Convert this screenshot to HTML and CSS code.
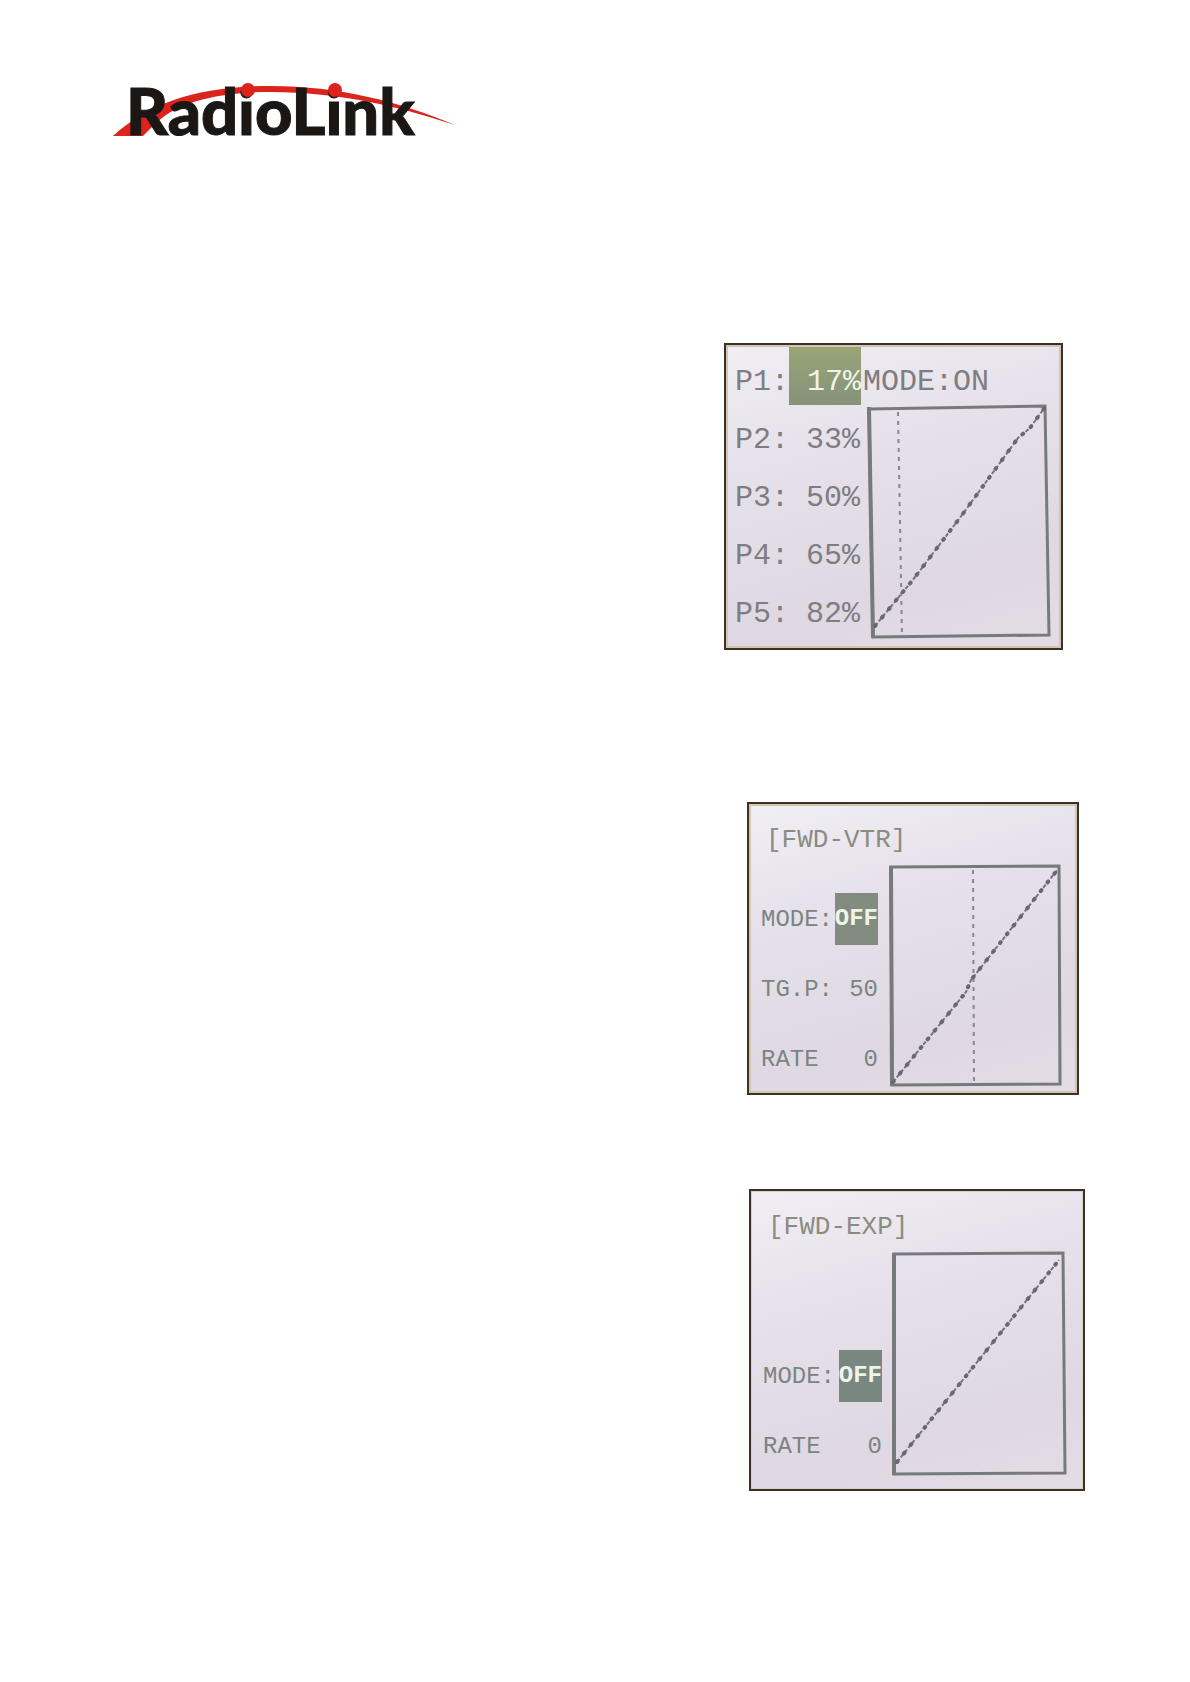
FILE: index.html
```html
<!DOCTYPE html>
<html lang="en">

<head>
    <meta charset="UTF-8">
    <meta name="viewport" content="width=device-width, initial-scale=1.0">
    <title>RadioLink</title>
    <link rel="stylesheet" href="styles.css">
</head>

<body>
    <div class="page">
        <header>
            <svg class="logo" viewBox="0 0 350 60" role="img" aria-label="RadioLink">
                <path fill="#dc231c" d="M3 56C40 22 90 6 160 6C230 6 290 22 345 45C290 27 230 12 160 12C115 12 85 20 66 29C52 36 45 44 33 56Z" />
                <text class="logo-text" x="16" y="55">RadioLink</text>
                <circle fill="#dc231c" cx="138" cy="10" r="7" />
                <circle fill="#dc231c" cx="225" cy="10" r="7" />
            </svg>
        </header>
        <main>
            <section class="screen points">
                <div class="list">
                    <p><span>P1:</span><mark>17%</mark></p>
                    <p><span>P2:</span><span>33%</span></p>
                    <p><span>P3:</span><span>50%</span></p>
                    <p><span>P4:</span><span>65%</span></p>
                    <p><span>P5:</span><span>82%</span></p>
                </div>
                <div class="side">
                    <p class="mode">MODE:ON</p>
                    <svg class="chart" viewBox="-2 0 196 240">
                        <path class="box" d="M4 7L180 4L184 233L8 235Z" />
                        <path class="edge" d="M4 5V7L8 236" />
                        <path class="marker" d="M33 10L37 233" />
                        <path class="curve" d="M10 224L37 191L47 179L97 113L153 36L165 26L180 5" />
                        <path class="beads" d="M10 224L37 191L47 179L97 113L153 36L165 26L180 5" />
                    </svg>
                </div>
            </section>

            <section class="screen vtr">
                <h2>[FWD-VTR]</h2>
                <div class="body">
                    <div class="list">
                        <p><span>MODE:</span><mark>OFF</mark></p>
                        <p><span>TG.P:</span><span>50</span></p>
                        <p><span>RATE</span><span>0</span></p>
                    </div>
                    <svg class="chart" viewBox="0 0 190 226">
                        <path class="box" d="M6 3L174 2L175 220L7 221Z" />
                        <path class="edge" d="M6 2L7 222" />
                        <path class="marker" d="M88 6L89 219" />
                        <path class="curve" d="M8 218L81 128L86 116L173 5" />
                        <path class="beads" d="M8 218L81 128L86 116L173 5" />
                    </svg>
                </div>
            </section>

            <section class="screen exp">
                <h2>[FWD-EXP]</h2>
                <div class="body">
                    <div class="list">
                        <p><span>MODE:</span><mark>OFF</mark></p>
                        <p><span>RATE</span><span>0</span></p>
                    </div>
                    <svg class="chart" viewBox="0 0 192 234">
                        <path class="box" d="M5 3L174 2L176 222L5 223Z" />
                        <path class="edge" d="M5 2V224" />
                        <path class="curve" d="M8 211L170 9" />
                        <path class="beads" d="M8 211L170 9" />
                    </svg>
                </div>
            </section>
        </main>
    </div>
</body>

</html>
```

FILE: styles.css
```css
* {
    box-sizing: border-box;
}
body {
    margin: 0;
    background-color: white;
}
p, h2 {
    margin: 0;
}
.page {
    padding: 80px 105px;
}
.logo {
    display: block;
    width: 350px;
    height: 60px;
    margin-left: 5px;
}
.logo-text {
    font: 900 65px Lato, sans-serif;
    fill: #1a1715;
    stroke: #1a1715;
    stroke-width: 1;
}
main {
    display: flex;
    flex-direction: column;
    align-items: flex-end;
    padding-top: 203px;
}

/* lcd screens */
.screen {
    border: 2px solid #3a3226;
    box-shadow: inset 0 0 0 2px #d3c5b2;
    padding: 2px;
    background: linear-gradient(165deg, #f1eef4 0%, #e5e0ea 35%, #dfd8e2 75%, #e4dbe5 100%);
    font-family: "Liberation Mono", monospace;
    color: #7d7d82;
}
.list p {
    display: flex;
    justify-content: space-between;
}
.screen mark {
    color: #f0f4e8;
}

.points {
    display: grid;
    grid-template-columns: 135px 1fr;
    width: 339px;
    height: 307px;
    margin-right: 22px;
    font-size: 30px;
}
.points .list {
    padding-left: 7px;
    padding-right: 3px;
}
.points .list p {
    height: 58px;
}
.points span, .points mark, .mode {
    padding-top: 12px;
    line-height: 46px;
}
.points mark {
    padding-left: 18px;
    background: linear-gradient(#97a576, #87927a);
}
.mode {
    height: 55px;
}

.vtr, .exp {
    font-size: 24px;
}
.vtr {
    width: 332px;
    height: 293px;
    margin-top: 152px;
    margin-right: 6px;
}
.exp {
    width: 336px;
    height: 302px;
    margin-top: 94px;
    box-shadow: inset 0 0 0 1px #d9cfc5;
}
.screen h2 {
    padding: 10px 0 0 15px;
    font-size: 26px;
    font-weight: normal;
    line-height: 48px;
    color: #8b8c80;
}
.body {
    display: grid;
    grid-template-columns: 134px 1fr;
}
.exp .body {
    grid-template-columns: 136px 1fr;
}
.vtr .list, .exp .list {
    padding: 20px 7px 0 10px;
}
.exp .list {
    padding-top: 90px;
}
.vtr .list p, .exp .list p {
    height: 70px;
    align-items: center;
    color: #7b8480;
}
.vtr mark, .exp mark {
    line-height: 52px;
    font-weight: bold;
    background-color: #818c7e;
}
.exp mark {
    background-color: #788780;
}

/* curves */
.chart {
    display: block;
    width: 100%;
    fill: none;
}
.box {
    stroke: #777a7d;
    stroke-width: 3;
}
.edge {
    stroke: #777a7d;
    stroke-width: 4;
}
.marker {
    stroke: #8a8590;
    stroke-width: 2;
    stroke-dasharray: 4 5;
}
.curve {
    stroke: #77727d;
    stroke-width: 2;
    stroke-dasharray: 4 2;
}
.beads {
    stroke: #6a6672;
    stroke-width: 4;
    stroke-linecap: round;
    stroke-dasharray: 1 10;
}
```
